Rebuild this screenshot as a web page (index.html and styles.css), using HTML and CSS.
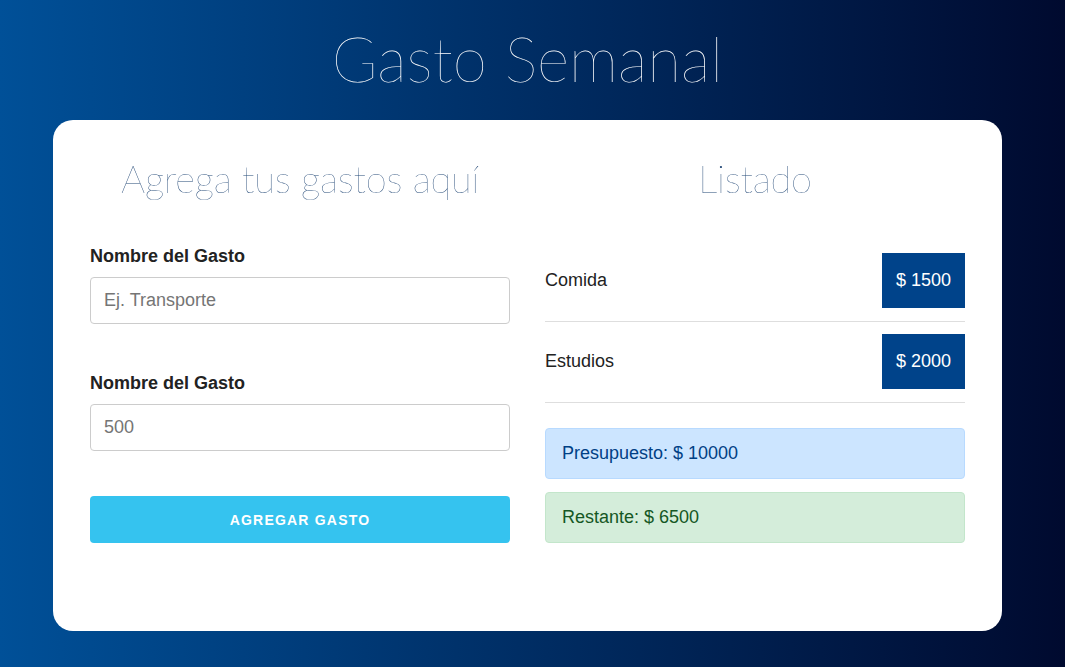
FILE: index.html
```html
<!DOCTYPE html>
<html lang="es">
<head>
    <meta charset="UTF-8">
    <meta name="viewport" content="width=device-width, initial-scale=1.0">
    <title>Gasto Semanal</title>
    <link rel="stylesheet" href="styles.css">
</head>
<body>
    <div class="app">
        <h1 class="app-title">Gasto Semanal</h1>

        <div class="card">
            <div class="column">
                <h2 class="column-title">Agrega tus gastos aquí</h2>

                <form class="form">
                    <div class="field">
                        <label>Nombre del Gasto</label>
                        <input type="text" class="input" placeholder="Ej. Transporte">
                    </div>
                    <div class="field">
                        <label>Nombre del Gasto</label>
                        <input type="number" class="input" placeholder="500">
                    </div>
                    <button type="button" class="btn">Agregar Gasto</button>
                </form>
            </div>

            <div class="column">
                <h2 class="column-title">Listado</h2>

                <ul class="gastos">
                    <li class="gasto">
                        <span>Comida</span>
                        <span class="badge">$ 1500</span>
                    </li>
                    <li class="gasto">
                        <span>Estudios</span>
                        <span class="badge">$ 2000</span>
                    </li>
                </ul>

                <div class="alert alert-primary">Presupuesto: $ 10000</div>
                <div class="alert alert-success">Restante: $ 6500</div>
            </div>
        </div>
    </div>
</body>
</html>
```

FILE: styles.css
```css
:root {
    --bg-start: #005098;
    --bg-end: #000a2f;
    --heading: #1f4574;
    --text: #222;
    --badge: #00438a;
    --button: #35c3ef;
}

* {
    box-sizing: border-box;
}

html, body {
    height: 100%;
}

body {
    margin: 0;
    background: linear-gradient(to right, var(--bg-start), var(--bg-end));
    font-family: "Liberation Sans", Arial, sans-serif;
    color: var(--text);
}

.app {
    width: 949px;
    margin-left: 53px;
    padding-top: 21px;
}

.app-title {
    margin: 0 0 25px;
    font-family: Lato, "Open Sans", sans-serif;
    font-weight: 100;
    font-size: 62px;
    line-height: 1.2;
    color: #fff;
    text-align: center;
}

.card {
    background: #fff;
    border-radius: 20px;
    padding: 34px 37px 88px;
    display: grid;
    grid-template-columns: 1fr 1fr;
    gap: 35px;
}

.column-title {
    margin: 0;
    font-family: Lato, "Open Sans", sans-serif;
    font-weight: 100;
    font-size: 38px;
    letter-spacing: -0.2px;
    line-height: 48px;
    color: var(--heading);
    text-align: center;
    /* grayscale smoothing instead of colour fringes */
    will-change: transform;
}

.form {
    margin-top: 43px;
}

.field {
    margin-bottom: 48px;
}

.field:last-of-type {
    margin-bottom: 45px;
}

.field label {
    display: block;
    font-weight: bold;
    font-size: 18px;
    line-height: 22px;
    margin-bottom: 10px;
}

.input {
    display: block;
    width: 100%;
    height: 47px;
    padding: 0 13px;
    border: 1px solid #ccc;
    border-radius: 4px;
    font-family: inherit;
    font-size: 18px;
    color: var(--text);
}

.input::placeholder {
    color: #757575;
}

.btn {
    display: block;
    width: 100%;
    height: 47px;
    border: 0;
    border-radius: 4px;
    background: var(--button);
    color: #fff;
    font-family: inherit;
    font-weight: bold;
    font-size: 14px;
    letter-spacing: 1.2px;
    text-transform: uppercase;
}

.gastos {
    list-style: none;
    margin: 39px 0 25px;
    padding: 0;
}

.gasto {
    display: flex;
    justify-content: space-between;
    align-items: center;
    padding: 12px 0 13px;
    border-bottom: 1px solid #dedede;
    font-size: 18px;
}

.badge {
    display: flex;
    align-items: center;
    height: 55px;
    padding: 0 14px;
    background: var(--badge);
    color: #fff;
}

.alert {
    height: 51px;
    display: flex;
    align-items: center;
    padding: 0 16px;
    border: 1px solid transparent;
    border-radius: 4px;
    font-size: 18px;
}

.alert + .alert {
    margin-top: 13px;
}

.alert-primary {
    background: #cce5ff;
    border-color: #b8daff;
    color: #004085;
}

.alert-success {
    background: #d4edda;
    border-color: #c3e6cb;
    color: #155724;
}
```
